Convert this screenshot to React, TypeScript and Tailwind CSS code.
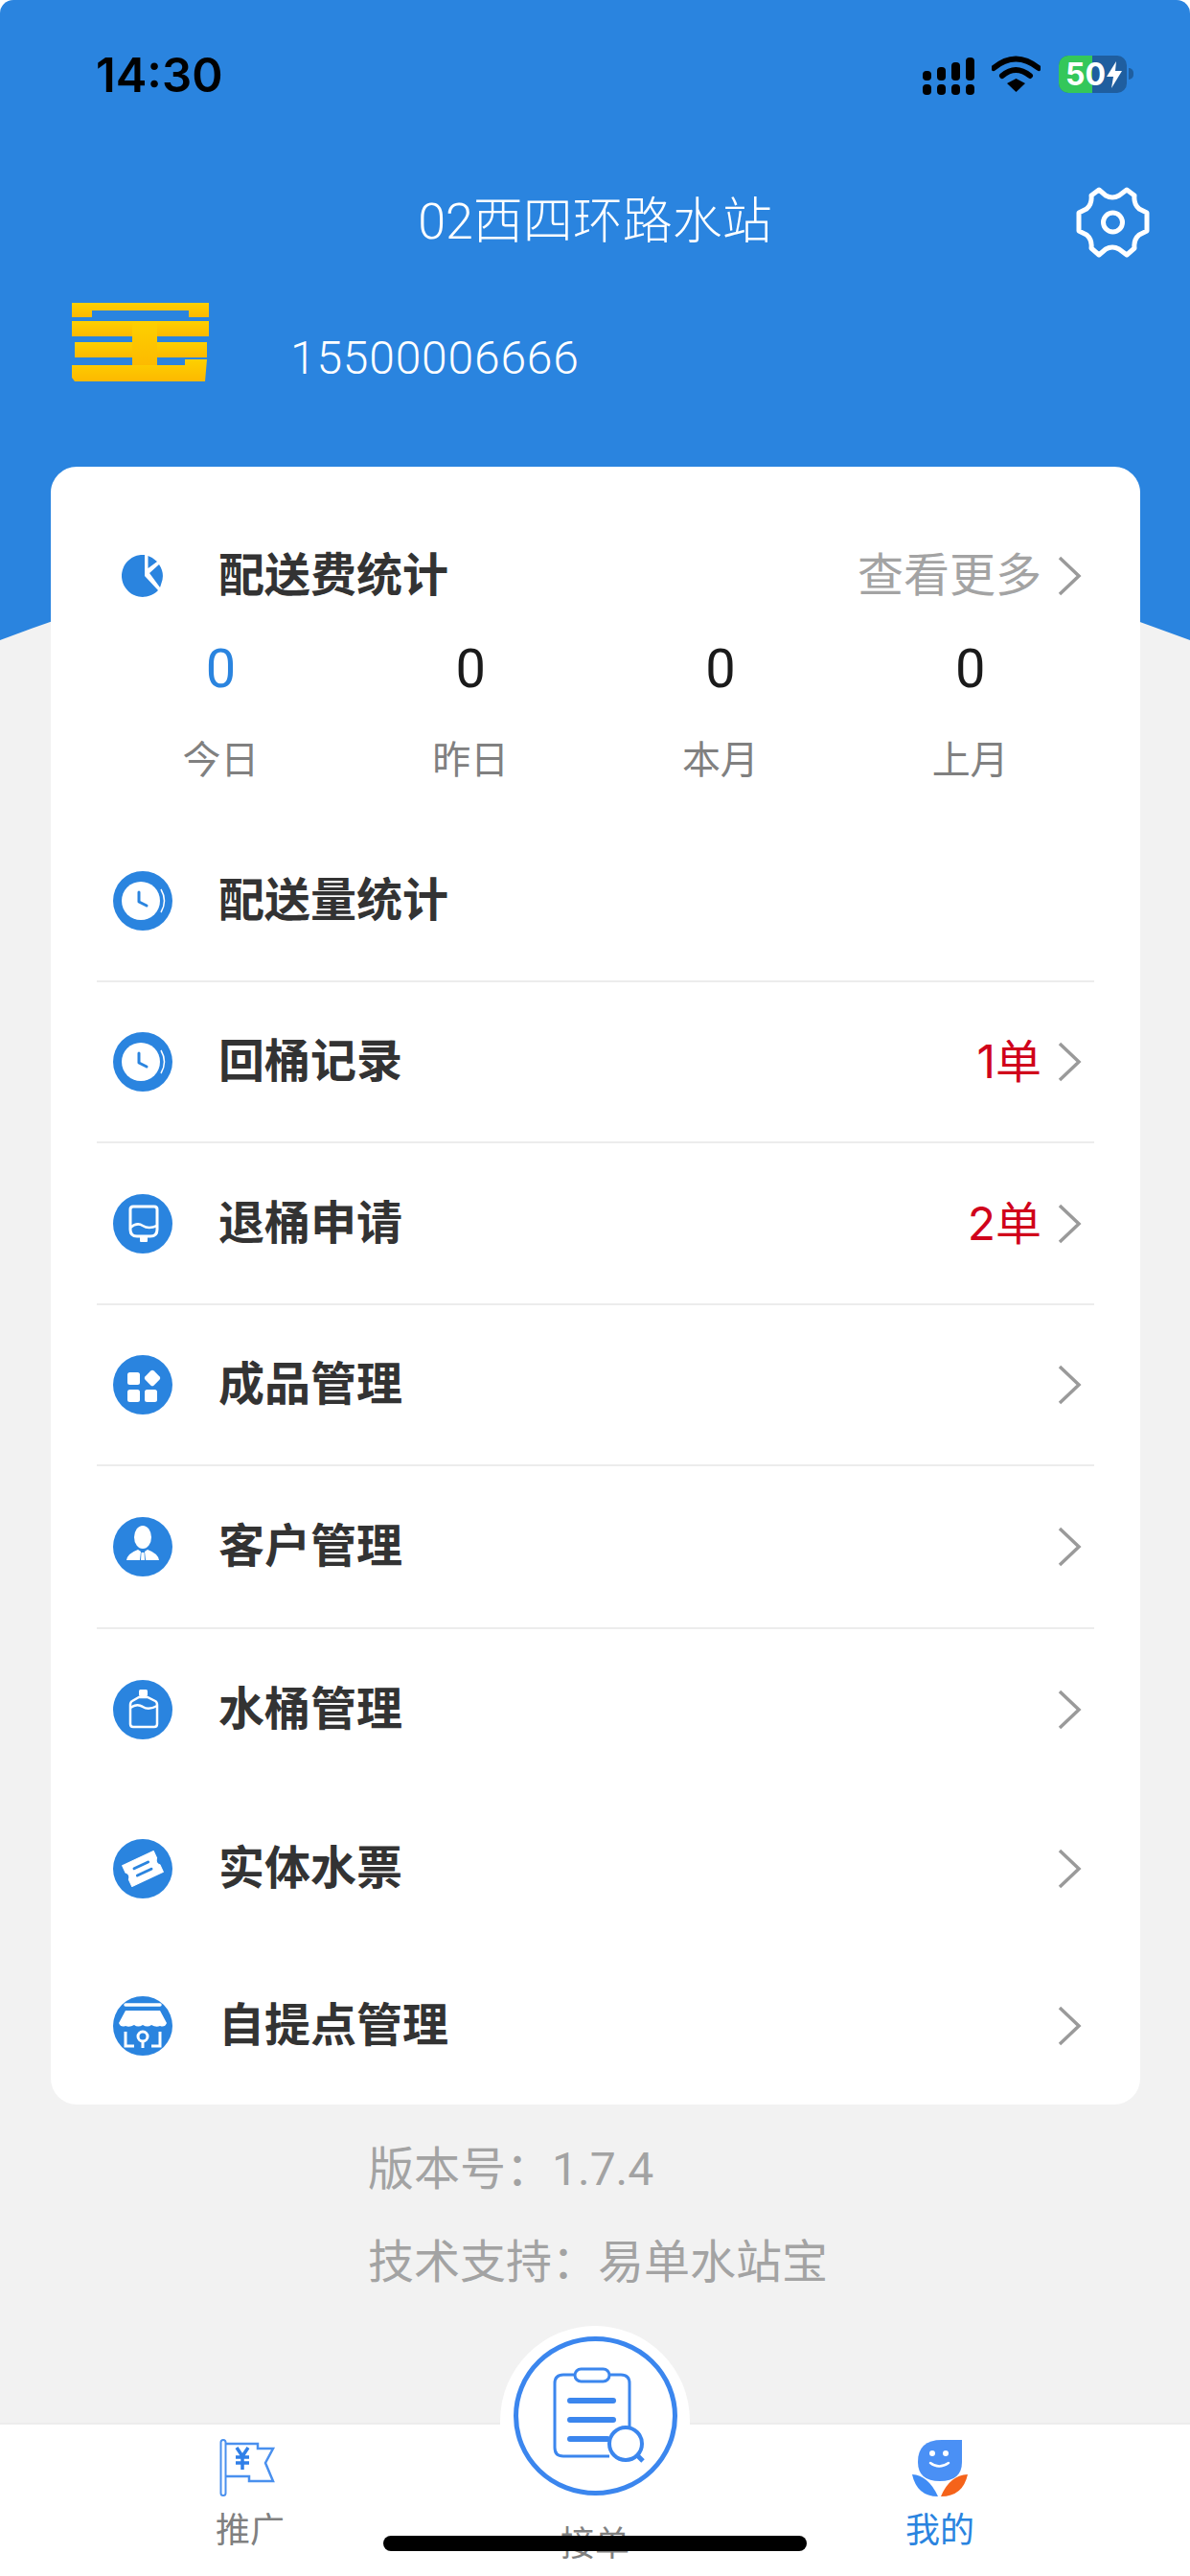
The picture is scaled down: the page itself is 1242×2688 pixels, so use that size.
const BLUE = "#2a84df";

function Chevron() {
  return (
    <svg width="26" height="44" viewBox="0 0 26 44" fill="none" className="shrink-0">
      <path d="M3 3 L23 22 L3 41" stroke="#9a9a9a" strokeWidth="3.5" />
    </svg>
  );
}

function Disc({ children }: { children: React.ReactNode }) {
  return (
    <svg width="62" height="62" viewBox="0 0 62 62" fill="none" className="shrink-0">
      <circle cx="31" cy="31" r="31" fill={BLUE} />
      {children}
    </svg>
  );
}

function ClockIcon() {
  return (
    <Disc>
      <circle cx="29" cy="31" r="20" fill="white" />
      <path d="M50 19 Q57 31 50 43" stroke="white" strokeWidth="1.5" />
      <path d="M27 22 V32 L35 36" stroke={BLUE} strokeWidth="3" strokeLinecap="round" strokeLinejoin="round" />
    </Disc>
  );
}

function ReturnIcon() {
  return (
    <Disc>
      <path d="M21 13 H43 Q46 13 46 16 V37 Q46 44 39 44 H25 Q18 44 18 37 V16 Q18 13 21 13 Z" stroke="white" strokeWidth="3" />
      <path d="M18 35 Q25 29 31 33 T46 33" stroke="white" strokeWidth="2.5" />
      <rect x="28" y="44" width="8" height="6" rx="1" fill="white" />
    </Disc>
  );
}

function ProductIcon() {
  return (
    <Disc>
      <rect x="15" y="18" width="13" height="13" rx="2.5" fill="white" />
      <rect x="15" y="36" width="13" height="13" rx="2.5" fill="white" />
      <rect x="33" y="36" width="13" height="13" rx="2.5" fill="white" />
      <rect x="34.5" y="17.5" width="13" height="13" rx="2.5" fill="white" transform="rotate(45 41 24)" />
    </Disc>
  );
}

function PersonIcon() {
  return (
    <Disc>
      <ellipse cx="31" cy="21" rx="9" ry="12" fill="white" />
      <path d="M14 45 Q15 38 26 34 L29 36 L28 45 Z M48 45 Q47 38 36 34 L33 36 L34 45 Z" fill="white" />
      <path d="M29.5 37 H32.5 L33 45 H29 Z" fill="white" />
    </Disc>
  );
}

function BottleIcon() {
  return (
    <Disc>
      <rect x="27" y="10" width="9" height="7" rx="1.5" fill="white" />
      <path d="M27 18 H36 L44 22 Q46 23 46 26 V46 Q46 49 43 49 H21 Q18 49 18 46 V26 Q18 23 20 22 Z" stroke="white" strokeWidth="2.5" />
      <path d="M18 29 Q25 24 31 28 T46 27" stroke="white" strokeWidth="2.5" />
    </Disc>
  );
}

function TicketIcon() {
  return (
    <Disc>
      <g transform="rotate(-25 31 31)">
        <path d="M13 19 H49 V27 Q45 31 49 35 V43 H13 V35 Q17 31 13 27 Z" fill="white" stroke="white" strokeWidth="1" strokeLinejoin="round" />
        <path d="M23 27 H39 M23 35 H39" stroke={BLUE} strokeWidth="3" strokeLinecap="round" />
      </g>
    </Disc>
  );
}

function StoreIcon() {
  return (
    <Disc>
      <path d="M13 9 H49" stroke="white" strokeWidth="3.5" strokeLinecap="round" />
      <path d="M13 15 H49 L56 28 Q54 33 49 31 Q45 33 40 30 Q36 33 31 30 Q26 33 22 30 Q17 33 13 31 Q8 33 6 28 Z" fill="white" />
      <path d="M13 37 V52 H22 M49 37 V52 H40" stroke="white" strokeWidth="3" />
      <circle cx="31" cy="42" r="5" stroke="white" strokeWidth="3" />
      <path d="M31 47 V54" stroke="white" strokeWidth="3" />
    </Disc>
  );
}

function StatusIcons() {
  return (
    <div className="flex items-start mr-[59px]">
      <svg width="54" height="39" viewBox="0 0 54 39" fill="black">
        <rect x="0" y="14" width="9" height="10" rx="4" />
        <rect x="15" y="10" width="9" height="14" rx="4" />
        <rect x="30" y="5" width="9" height="19" rx="4" />
        <rect x="45" y="0" width="9" height="24" rx="4" />
        <rect x="0" y="28" width="9" height="11" rx="4" />
        <rect x="15" y="28" width="9" height="11" rx="4" />
        <rect x="30" y="28" width="9" height="11" rx="4" />
        <rect x="45" y="28" width="9" height="11" rx="4" />
      </svg>
      <svg width="51" height="38" viewBox="0 0 51 38" fill="none" className="ml-[18px] -mt-[2px]">
        <path d="M2 13 Q25 -6 49 13" stroke="black" strokeWidth="6" strokeLinecap="round" />
        <path d="M11 21 Q25 9 40 21" stroke="black" strokeWidth="6" strokeLinecap="round" />
        <path d="M16 29 L25.5 24 L35 29 L25.5 38 Z" fill="black" />
      </svg>
      <div className="relative ml-[19px] -mt-[2px] w-[71px] h-[39px] rounded-[10px] overflow-hidden bg-[#1f5e9f] flex">
        <div className="w-[35px] h-full bg-[#34c75a]" />
        <span className="absolute left-[7px] top-0 leading-[39px] text-[32px] font-bold text-white font-['Inter',sans-serif]">50</span>
        <svg width="16" height="28" viewBox="0 0 16 28" fill="white" className="absolute left-[50px] top-[6px]">
          <path d="M10 0 L0 16 H7 L5 28 L16 10 H9 Z" />
        </svg>
      </div>
      <div className="w-[5px] h-[12px] mt-[11px] ml-[2px] rounded-r-full bg-[#1f5e9f]" />
    </div>
  );
}

function Logo() {
  return (
    <svg width="143" height="82" viewBox="0 0 143 82" className="shrink-0">
      <defs>
        <linearGradient id="gold" x1="0" y1="0" x2="0" y2="1">
          <stop offset="0" stopColor="#fdd000" />
          <stop offset="1" stopColor="#fdb900" />
        </linearGradient>
      </defs>
      <g fill="url(#gold)">
        <path d="M0 0 H143 V15 H122 V8 H21 V15 H0 Z" />
        <rect x="0" y="19" width="143" height="16" />
        <rect x="3" y="41" width="138" height="16" />
        <rect x="63" y="19" width="26" height="48" />
        <path d="M0 65 H118 V59 H141 L139 82 H3 L0 78 Z" />
      </g>
    </svg>
  );
}

const rows = [
  { name: "配送量统计", icon: <ClockIcon />, h: "h-[168px] border-b-2", plain: true },
  { name: "回桶记录", icon: <ClockIcon />, extra: "1单", h: "h-[168px] border-b-2" },
  { name: "退桶申请", icon: <ReturnIcon />, extra: "2单", h: "h-[169px] border-b-2" },
  { name: "成品管理", icon: <ProductIcon />, h: "h-[168px] border-b-2" },
  { name: "客户管理", icon: <PersonIcon />, h: "h-[170px] border-b-2" },
  { name: "水桶管理", icon: <BottleIcon />, h: "h-[168px]" },
  { name: "实体水票", icon: <TicketIcon />, h: "h-[164px]" },
  { name: "自提点管理", icon: <StoreIcon />, h: "h-[164px]" },
];

const stats = [
  { label: "今日", color: "text-[#2a84df]" },
  { label: "昨日", color: "text-[#1a1a1a]" },
  { label: "本月", color: "text-[#1a1a1a]" },
  { label: "上月", color: "text-[#1a1a1a]" },
];

export default function App() {
  return (
    <div className="w-[1242px] h-[2688px] bg-white overflow-hidden flex flex-col font-['Roboto','Noto_Sans_CJK_SC',sans-serif]">
      <header className="relative h-[668px] shrink-0 rounded-t-[14px] bg-[#2a84df] text-white">
        <svg width="1242" height="120" viewBox="0 0 1242 120" className="absolute bottom-0 left-0">
          <path d="M0 120 Q621 -116 1242 120 Z" fill="#f2f2f2" />
        </svg>
        <div className="relative">
          <div className="flex justify-between items-start h-[193px] pt-[60px]">
            <span className="ml-[100px] text-[49px] leading-[38px] font-semibold text-black font-['Inter',sans-serif]">14:30</span>
            <StatusIcons />
          </div>
          <div className="grid grid-cols-[1fr_auto_1fr] items-center h-[74px]">
            <div />
            <h1 className="text-[52px] font-light leading-[78px]">02西四环路水站</h1>
            <svg width="77" height="74" viewBox="0 0 77 74" fill="none" className="justify-self-end mr-[42px]">
              <path
                d="M24 3 L31 9 Q38 13 45 9 L53 3 L61 9 Q60 18 66 23 L74 27 V46 L66 50 Q60 55 61 64 L53 71 L45 65 Q38 61 31 65 L24 71 L16 64 Q17 55 11 50 L3 46 V27 L11 23 Q17 18 16 9 Z"
                stroke="white"
                strokeWidth="5"
                strokeLinejoin="round"
              />
              <circle cx="38.5" cy="37" r="10" stroke="white" strokeWidth="5" />
            </svg>
          </div>
          <div className="flex items-center pl-[75px] pt-[48px]">
            <Logo />
            <span className="ml-[85px] mt-[34px] text-[48px] font-light leading-[50px] tracking-[0.8px]">15500006666</span>
          </div>
        </div>
      </header>

      <main className="flex-1 bg-[#f2f2f2] px-[53px]">
        <section className="relative -mt-[181px] h-[1709px] w-[1137px] rounded-[27px] bg-white">
          <div className="h-[370px] pt-[91px]">
            <div className="flex items-center h-[46px] pl-[73px] pr-[61px]">
              <svg width="44" height="44" viewBox="0 0 44 44" className="shrink-0">
                <path d="M25 0 V22 L39 37 A22 22 0 1 1 25 0 Z" fill="#2a84df" />
                <path d="M28.5 1 A22 22 0 0 1 38 7 L28.5 14 Z" fill="#2a84df" />
                <path d="M30 19 L40 10 A22 22 0 0 1 42 31 L41 34 Z" fill="#2a84df" />
              </svg>
              <span className="ml-[58px] text-[48px] leading-[46px] font-bold text-[#333333]">配送费统计</span>
              <span className="ml-auto text-[48px] leading-[46px] text-[#a3a3a3]">查看更多</span>
              <span className="ml-[16px]"><Chevron /></span>
            </div>
            <div className="grid grid-cols-4 mt-[44px] mx-[47px]">
              {stats.map((s) => (
                <div key={s.label} className="flex flex-col items-center">
                  <span className={`text-[56px] leading-[60px] ${s.color}`}>0</span>
                  <span className="mt-[44px] text-[40px] leading-[44px] text-[#808080]">{s.label}</span>
                </div>
              ))}
            </div>
          </div>

          <ul className="mx-[48px]">
            {rows.map((r) => (
              <li key={r.name} className={`flex items-center pl-[17px] pr-[13px] border-[#ececec] ${r.h}`}>
                {r.icon}
                <span className="ml-[48px] text-[48px] font-bold leading-[50px] text-[#333333]">{r.name}</span>
                {r.extra && <span className="ml-auto text-[48px] leading-[50px] text-[#d0021b] font-['Inter','Noto_Sans_CJK_SC',sans-serif]">{r.extra}</span>}
                {!r.plain && (
                  <span className={r.extra ? "ml-[16px]" : "ml-auto"}>
                    <Chevron />
                  </span>
                )}
              </li>
            ))}
          </ul>
        </section>

        <div className="pl-[331px] pt-[43px] text-[48px] leading-[50px] text-[#a3a3a3]">
          <p>版本号：1.7.4</p>
          <p className="mt-[47px]">技术支持：易单水站宝</p>
        </div>
      </main>

      <nav className="relative h-[160px] shrink-0 border-t-2 border-[#ececec] bg-white grid grid-cols-3 px-[81px] text-[36px] leading-[40px] text-[#808080]">
        <div className="flex flex-col items-center pt-[15px]">
          <svg width="60" height="60" viewBox="0 0 60 60" fill="none" className="-ml-[4px]">
            <rect x="1.5" y="1" width="5" height="58" rx="2.5" stroke="#4a90ee" strokeWidth="2" />
            <path d="M7 5 H40 V10 H56 L48 25 L56 44 H31 V39 H7" stroke="#4a90ee" strokeWidth="2.5" />
            <path d="M18 9 L24 18 L30 9 M24 18 V32 M17 19 H31 M17 25 H31" stroke="#2f7fe8" strokeWidth="3.5" />
          </svg>
          <span className="mt-[16px]">推广</span>
        </div>
        <div className="relative flex flex-col items-center -mt-[92px]">
          <div className="absolute -top-[11px] left-[81px] w-[198px] h-[103px] rounded-t-[99px] bg-white" />
          <svg width="171" height="166" viewBox="0 0 171 166" fill="none" className="relative">
            <ellipse cx="85.5" cy="83" rx="83" ry="80.5" fill="white" stroke="#3b86ee" strokeWidth="5" />
            <path d="M64 40 H52 Q43 40 43 49 V116 Q43 125 52 125 H100 M121 95 V49 Q121 40 112 40 H100" stroke="#3b86ee" strokeWidth="3" />
            <rect x="64" y="34" width="36" height="13" rx="6.5" stroke="#3b86ee" strokeWidth="3" />
            <path d="M59 67 H104 M59 87 H104 M59 107 H98" stroke="#3b86ee" strokeWidth="6" strokeLinecap="round" />
            <circle cx="117" cy="112" r="17" fill="white" stroke="#3b86ee" strokeWidth="4" />
            <path d="M129 124 L135 130" stroke="#3b86ee" strokeWidth="5" />
          </svg>
          <span className="relative mt-[31px]">接单</span>
        </div>
        <div className="flex flex-col items-center pt-[15px] text-[#2a84df]">
          <svg width="60" height="62" viewBox="0 0 60 62" fill="none">
            <path d="M32 1 H53 V24 Q53 44 30 44 Q7 44 7 24 Q7 1 32 1 Z" fill="#4a90f5" />
            <circle cx="22" cy="15" r="3" fill="white" />
            <circle cx="36" cy="15" r="3" fill="white" />
            <path d="M20 25 Q29 32 39 25" stroke="white" strokeWidth="2.5" strokeLinecap="round" />
            <path d="M1 37 Q18 38 28 60 Q6 60 1 37 Z" fill="#3f8cf5" />
            <path d="M59 37 Q40 38 31 60 Q54 60 59 37 Z" fill="#f5631a" />
          </svg>
          <span className="mt-[14px]">我的</span>
        </div>
        <div className="absolute left-[400px] top-[116px] w-[442px] h-[16px] rounded-full bg-black" />
      </nav>
    </div>
  );
}
